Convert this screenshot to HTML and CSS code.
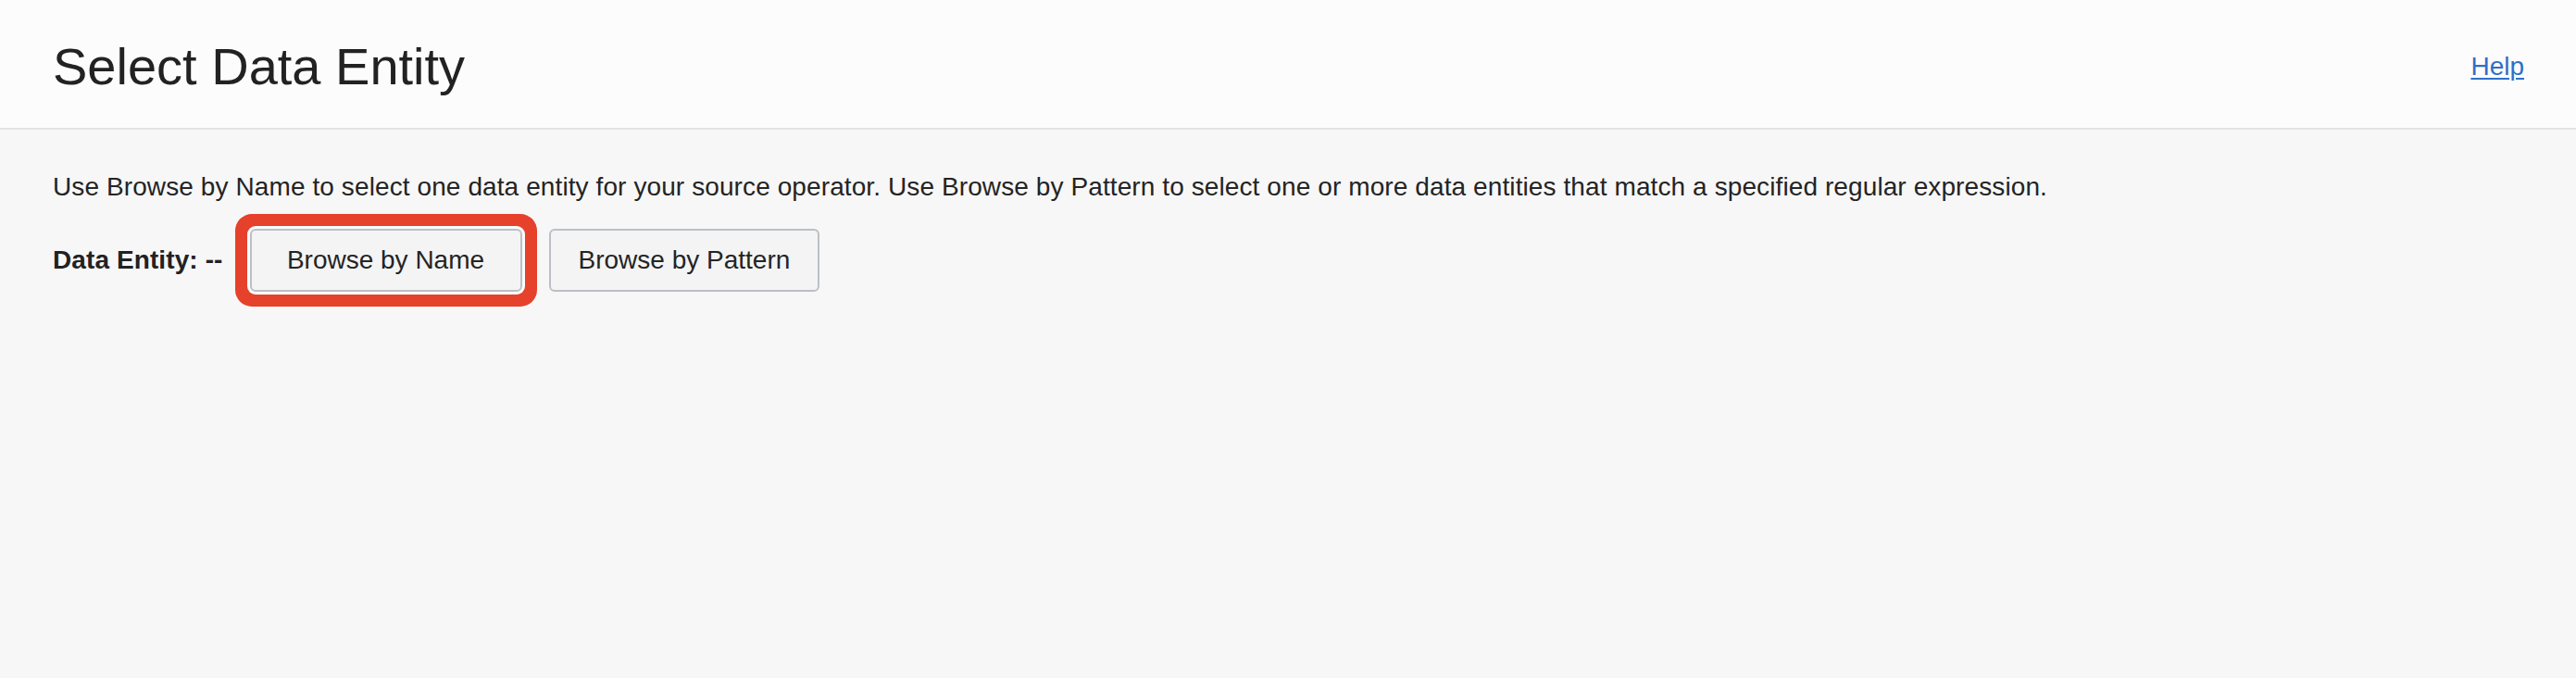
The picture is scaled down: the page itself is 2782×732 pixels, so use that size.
FILE: index.html
```html
<!DOCTYPE html>
<html lang="en">
<head>
<meta charset="utf-8">
<title>Select Data Entity</title>
<link rel="stylesheet" href="styles.css">
</head>
<body>
<header class="page-header">
  <h1 class="page-title">Select Data Entity</h1>
  <a class="help-link" href="#">Help</a>
</header>
<main class="content">
  <p class="intro">Use Browse by Name to select one data entity for your source operator. Use Browse by Pattern to select one or more data entities that match a specified regular expression.</p>
  <div class="entity-row">
    <span class="entity-label">Data Entity: --</span>
    <button class="btn btn-highlight" type="button">Browse by Name</button>
    <button class="btn" type="button">Browse by Pattern</button>
  </div>
</main>
</body>
</html>
```
FILE: styles.css
```css
html, body {
  margin: 0;
  padding: 0;
}

body {
  background: #f7f7f7;
  font-family: "Liberation Sans", Arial, Helvetica, sans-serif;
  color: #242424;
  width: 2782px;
  height: 732px;
  overflow: hidden;
}

.page-header {
  box-sizing: border-box;
  height: 140px;
  background: #fcfcfc;
  border-bottom: 2px solid #e4e4e4;
  display: flex;
  align-items: center;
  justify-content: space-between;
  padding: 6px 56px 0 57px;
}

.page-title {
  margin: 0;
  font-size: 56px;
  font-weight: 400;
  line-height: 1;
  color: #222;
}

.help-link {
  font-size: 28px;
  color: #2f6fc7;
  text-decoration: underline;
  text-underline-offset: 3px;
  text-decoration-thickness: 2px;
  line-height: 1;
}

.content {
  padding: 45px 57px 0 57px;
}

.intro {
  margin: 0;
  font-size: 28px;
  line-height: 34px;
  letter-spacing: 0.1px;
  color: #242424;
}

.entity-row {
  margin-top: 28px;
  display: flex;
  align-items: center;
  gap: 29px;
}

.entity-label {
  font-size: 28px;
  font-weight: 700;
  color: #222;
  letter-spacing: 0.1px;
}

.btn {
  box-sizing: border-box;
  height: 68px;
  padding: 0 30px;
  border: 2px solid #bcc0c4;
  border-radius: 6px;
  background: #f4f4f4;
  font-family: "Liberation Sans", Arial, Helvetica, sans-serif;
  font-size: 28px;
  color: #242424;
  cursor: pointer;
}

.btn-highlight {
  min-width: 294px;
  box-shadow: 0 0 0 3px #fbfbfb, 0 0 0 16px #e5412b;
}
```
